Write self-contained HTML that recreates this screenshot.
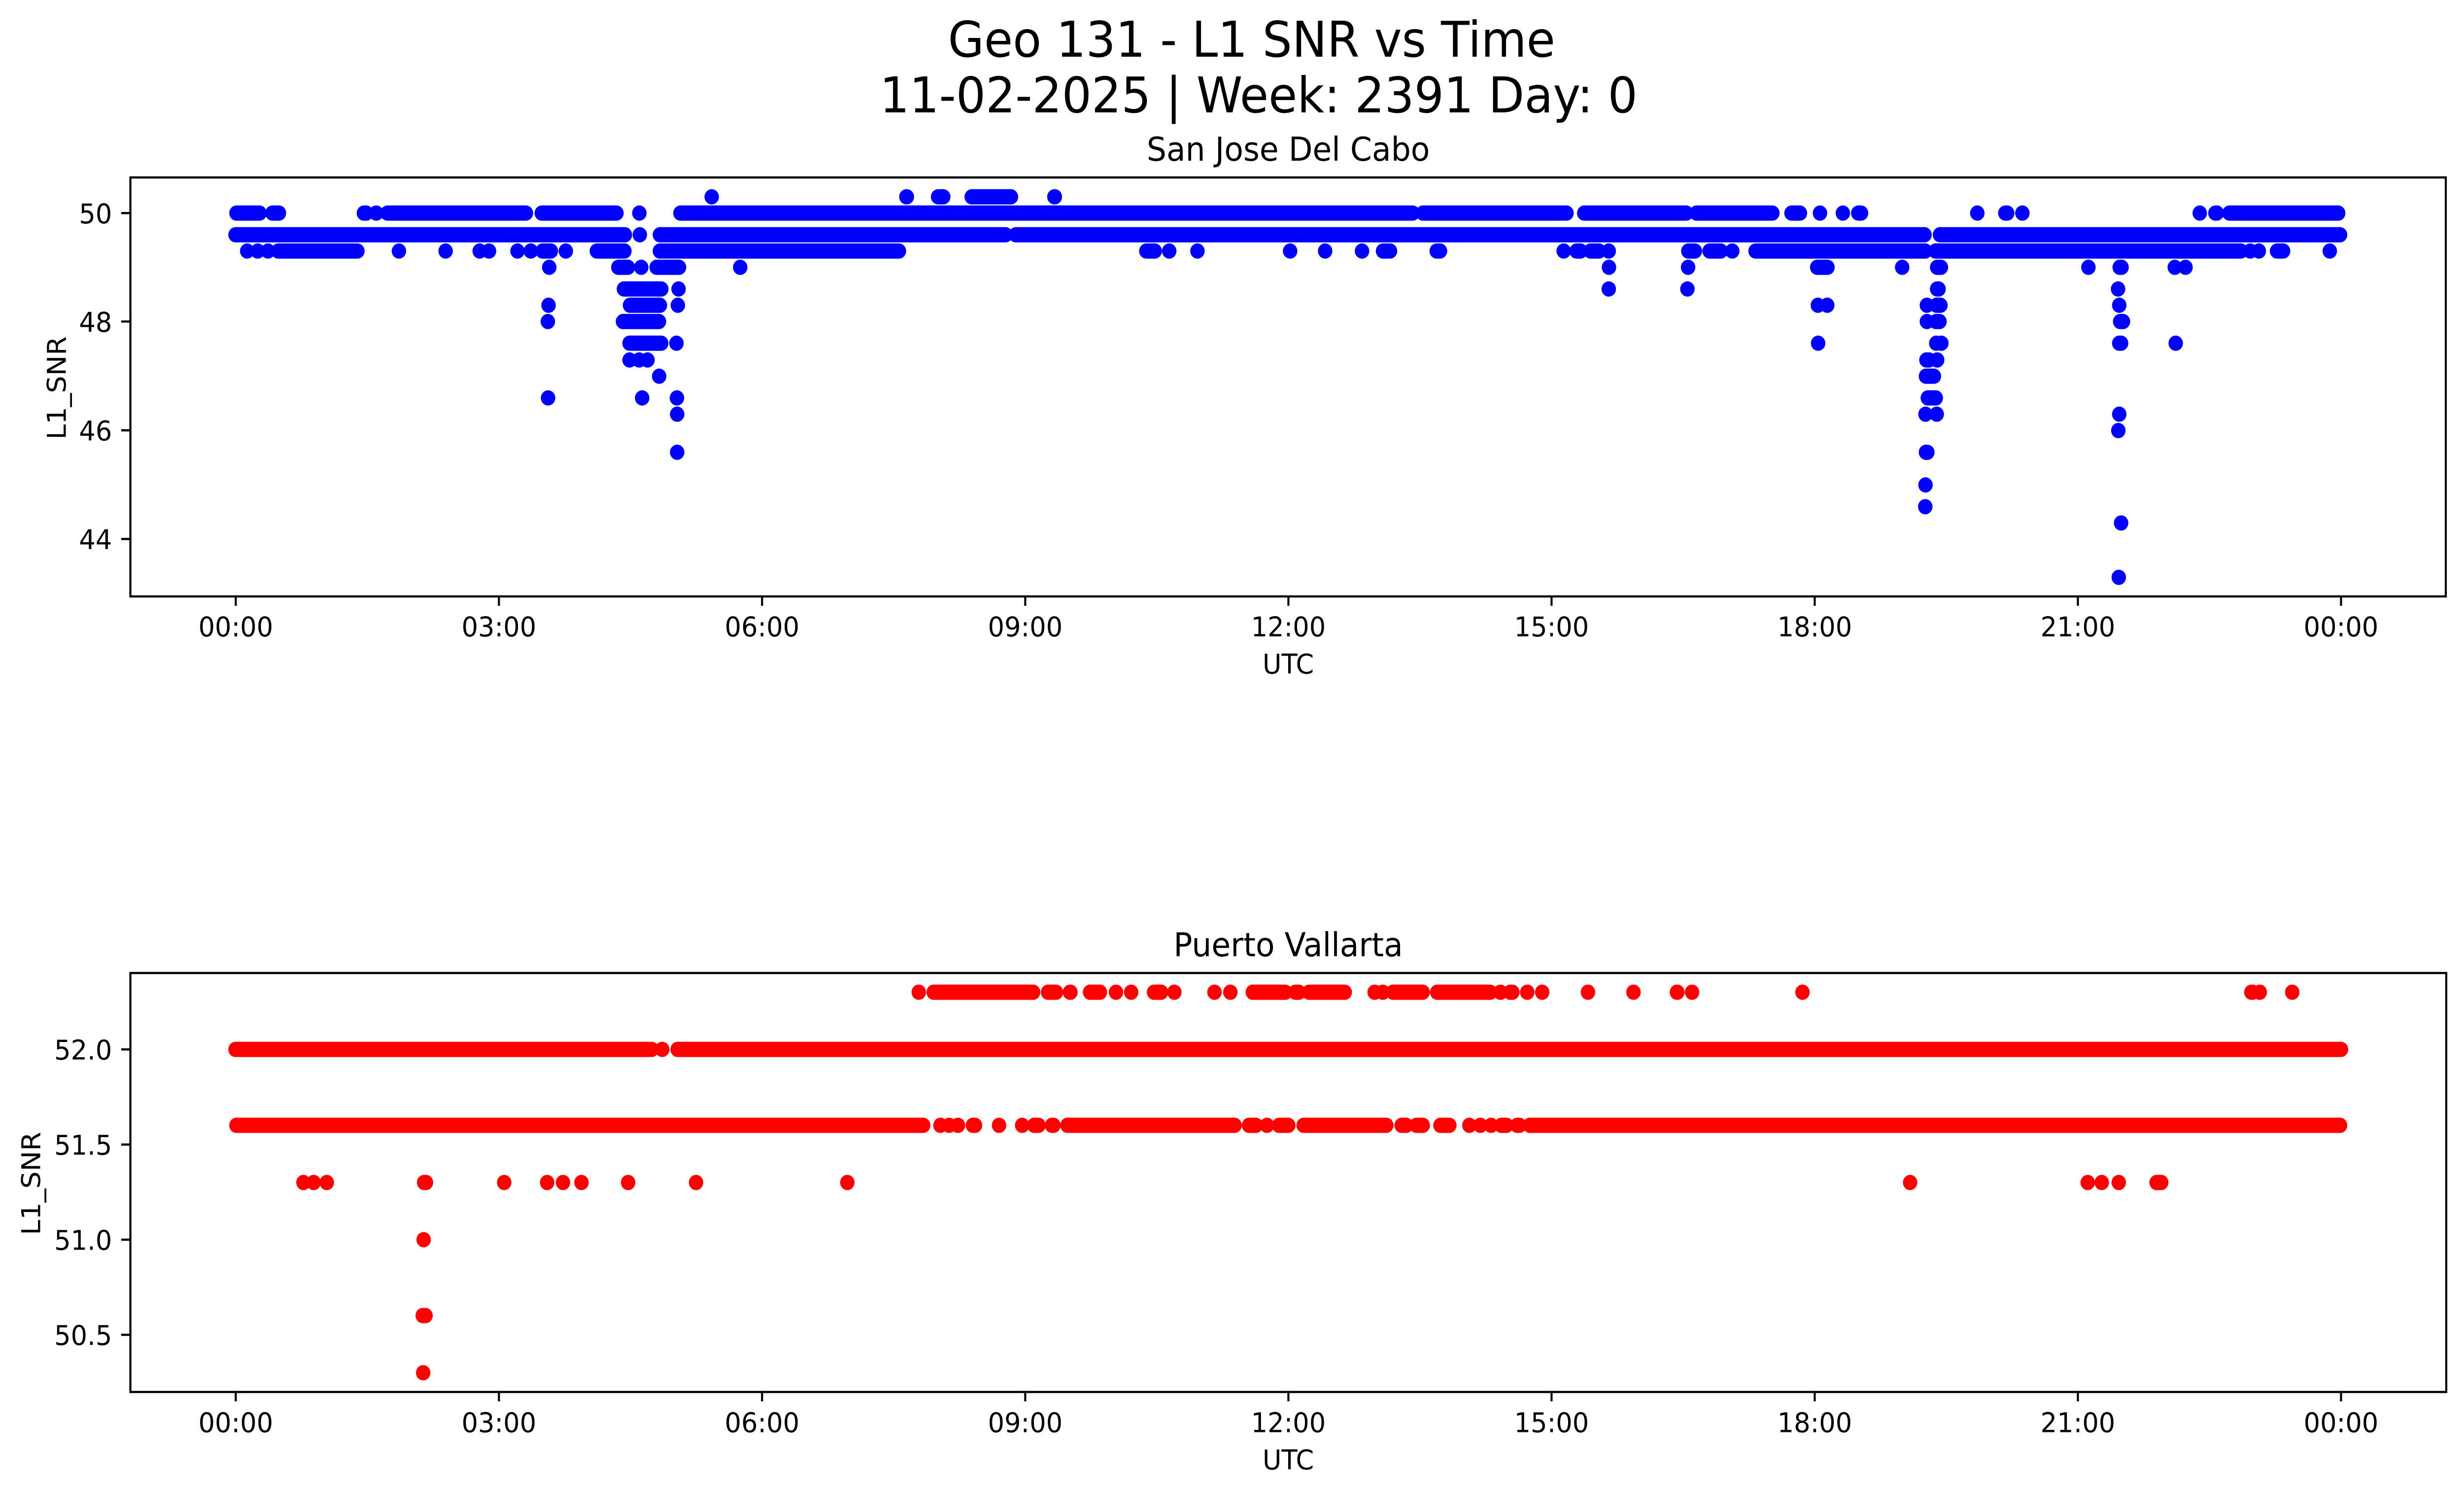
<!DOCTYPE html>
<html lang="en">
<head>
<meta charset="utf-8">
<title>Geo 131 - L1 SNR vs Time</title>
<style>
html,body{margin:0;padding:0;background:#fff;width:100%;height:100%;overflow:hidden}
svg{display:block;width:100vw;height:100vh}
text{font-family:"DejaVu Sans","Liberation Sans",sans-serif;fill:#000}
.t{font-size:55.56px}
.s{font-size:66.67px}
.h{font-size:100px}
.m{text-anchor:middle}
.e{text-anchor:end}
.ax{fill:none;stroke:#000;stroke-width:4.44}
.b{fill:none;stroke:#00f;stroke-width:31;stroke-linecap:round}
.r{fill:none;stroke:#f00;stroke-width:31;stroke-linecap:round}
</style>
</head>
<body>
<svg xmlns="http://www.w3.org/2000/svg" viewBox="0 0 5278 3033" preserveAspectRatio="none">
<rect width="5278" height="3033" fill="#fff"/>

<g class="b">
<path d="M1524.5 399.3h.01M1941.5 399.3H1942.5M2009.5 399.3H2020.5M2081.5 399.3H2165.5M2258.5 399.3H2259.5"/>
<path d="M506.5 432.3H556M583.5 432.3H597.5M779.5 432.3H784.5M806 432.3h.01M830 432.3H1126.5M1160.5 432.3H1320.5M1369.5 432.3h.01M1457.5 432.3H3026M3048 432.3H3355.5M3393.5 432.3H3612M3634 432.3H3796.5M3837.5 432.3H3855.5M3898.5 432.3h.01M3947.5 432.3h.01M3980.5 432.3H3986.5M4235.5 432.3h.01M4295.5 432.3H4299.5M4332 432.3h.01M4712 432.3h.01M4745.5 432.3H4748.5M4775.5 432.3H5008.5"/>
<path d="M504.5 476.3H1338.5M1370.5 476.3h.01M1413.5 476.3H2154M2176 476.3H4122.5M4155.5 476.3H5012.5"/>
<path d="M529.5 509.3h.01M552 509.3h.01M574 509.3h.01M596 509.3H765.5M854.5 509.3h.01M954.5 509.3h.01M1027.5 509.3h.01M1047.5 509.3h.01M1108.5 509.3h.01M1137 509.3h.01M1162 509.3H1180M1212 509.3h.01M1278.5 509.3H1337.5M1413.5 509.3H1925.5M2455.5 509.3H2473.5M2504.5 509.3h.01M2565 509.3h.01M2763.5 509.3h.01M2838.5 509.3h.01M2917.5 509.3h.01M2962.5 509.3H2977.5M3077.5 509.3H3084.5M3349.5 509.3h.01M3377 509.3H3385.5M3407 509.3H3425M3446 509.3h.01M3616.5 509.3H3630.5M3662 509.3H3686M3710.5 509.3h.01M3760.5 509.3H4124M4146 509.3H4800M4820 509.3h.01M4838.5 509.3h.01M4877.5 509.3H4890.5M4990.5 509.3h.01"/>
<path d="M1176.5 542.3h.01M1324.5 542.3H1345M1373.5 542.3h.01M1406.5 542.3H1454.5M1585.5 542.3h.01M3446.5 542.3h.01M3616 542.3h.01M3892.5 542.3H3914.5M4074.5 542.3h.01M4149.5 542.3H4157.5M4473.5 542.3h.01M4540.5 542.3H4544.5M4658.5 542.3h.01M4681.5 542.3h.01"/>
<path d="M1336.5 586.3H1416.5M1453.5 586.3h.01M3446 586.3h.01M3614.5 586.3h.01M4149.5 586.3H4152.5M4537 586.3h.01"/>
<path d="M1175 619.3h.01M1349.5 619.3H1413.5M1452 619.3h.01M3894 619.3h.01M3914 619.3h.01M4127.5 619.3h.01M4148 619.3H4156.5M4539.5 619.3h.01"/>
<path d="M1173.5 652.3h.01M1334.5 652.3H1411.5M4127.5 652.3h.01M4147 652.3H4154.5M4541.5 652.3H4547.5"/>
<path d="M1348.5 696.3H1416.5M1449 696.3h.01M3894.5 696.3h.01M4147.5 696.3h.01M4158.5 696.3h.01M4539.5 696.3H4543.5M4660.5 696.3h.01"/>
<path d="M1348.5 730.3h.01M1369 730.3h.01M1387 730.3h.01M4126.5 730.3H4132M4149.5 730.3h.01"/>
<path d="M1412 763.3h.01M4125.5 763.3H4142.5"/>
<path d="M1174 807.3h.01M1375.5 807.3h.01M1450 807.3h.01M4129.5 807.3H4146.5"/>
<path d="M1450.5 840.3h.01M4124.5 840.3h.01M4148.5 840.3h.01M4539.5 840.3h.01"/>
<path d="M4537.5 873.5h.01"/>
<path d="M1450.5 917.6h.01M4125.5 917.6H4128.5"/>
<path d="M4124.5 983.8h.01M4124 1028h.01M4543.5 1061h.01M4538.5 1171.3h.01"/>
</g>

<g class="r">
<path d="M1968 2013h.01M2000 2013H2213M2245 2013H2262M2292 2013H2293M2335 2013H2356M2390.5 2013h.01M2423 2013h.01M2472 2013H2487M2515.5 2013h.01M2601.5 2013h.01M2635.5 2013h.01M2683.5 2013H2753M2775 2013H2782M2804 2013H2880.5M2944.5 2013h.01M2962 2013h.01M2984 2013H3047.5M3078.5 2013H3192M3214 2013h.01M3235 2013H3239.5M3271.5 2013h.01M3303.5 2013h.01M3401.5 2013h.01M3499 2013h.01M3592 2013H3593M3624.5 2013h.01M3861 2013h.01M4822.5 2013H4825M4840.5 2013h.01M4910 2013h.01"/>
<path d="M504.5 2129H1396M1418.5 2129h.01M1451.5 2129H5014.5"/>
<path d="M506.5 2283H1977.5M2014.5 2283h.01M2033 2283h.01M2052 2283h.01M2084 2283H2088.5M2140 2283h.01M2189.5 2283h.01M2215.5 2283H2224.5M2253.5 2283H2256.5M2286.5 2283H2644.5M2675.5 2283H2690M2714 2283h.01M2740 2283H2759.5M2792.5 2283H2969.5M3002.5 2283H3012M3034 2283H3047.5M3085.5 2283H3104.5M3147.5 2283h.01M3171 2283h.01M3194 2283h.01M3216 2283H3227M3250 2283H3254.5M3277 2283H5012.5"/>
<path d="M650 2399h.01M672 2399h.01M700 2399h.01M908.5 2399H912.5M1080 2399h.01M1172 2399h.01M1206 2399h.01M1245.5 2399h.01M1345.5 2399h.01M1491 2399h.01M1815 2399h.01M4091.5 2399h.01M4472 2399h.01M4502 2399h.01M4538.5 2399h.01M4619.5 2399H4629.5"/>
<path d="M907.5 2515h.01M905.5 2669H911.5M906.5 2785h.01"/>
</g>

<rect class="ax" x="279.3" y="360" width="4959.7" height="850"/>
<rect class="ax" x="279.3" y="1974" width="4960.7" height="850"/>

<path class="ax" d="M505 1210v19M1068.7 1210v19M1632.4 1210v19M2196.1 1210v19M2759.8 1210v19M3323.5 1210v19M3887.2 1210v19M4450.9 1210v19M5014.6 1210v19"/>
<path class="ax" d="M505 2824v19M1068.7 2824v19M1632.4 2824v19M2196.1 2824v19M2759.8 2824v19M3323.5 2824v19M3887.2 2824v19M4450.9 2824v19M5014.6 2824v19"/>
<path class="ax" d="M279 432.3h-19.4M279 652.3h-19.4M279 873h-19.4M279 1093.5h-19.4"/>
<path class="ax" d="M279 2129h-19.4M279 2322h-19.4M279 2515h-19.4M279 2708h-19.4"/>

<text class="h m" x="2681" y="115">Geo 131 - L1 SNR vs Time</text>
<text class="h m" x="2696" y="228">11-02-2025 | Week: 2391 Day: 0</text>
<text class="s m" x="2759.5" y="326">San Jose Del Cabo</text>
<text class="s m" x="2759.5" y="1940">Puerto Vallarta</text>

<g class="t m">
<text x="505" y="1291">00:00</text><text x="1068.7" y="1291">03:00</text><text x="1632.4" y="1291">06:00</text><text x="2196.1" y="1291">09:00</text><text x="2759.8" y="1291">12:00</text><text x="3323.5" y="1291">15:00</text><text x="3887.2" y="1291">18:00</text><text x="4450.9" y="1291">21:00</text><text x="5014.6" y="1291">00:00</text>
<text x="2759.5" y="1366.7">UTC</text>
<text x="505" y="2905.5">00:00</text><text x="1068.7" y="2905.5">03:00</text><text x="1632.4" y="2905.5">06:00</text><text x="2196.1" y="2905.5">09:00</text><text x="2759.8" y="2905.5">12:00</text><text x="3323.5" y="2905.5">15:00</text><text x="3887.2" y="2905.5">18:00</text><text x="4450.9" y="2905.5">21:00</text><text x="5014.6" y="2905.5">00:00</text>
<text x="2759.5" y="2981">UTC</text>
<text transform="translate(141 787) rotate(-90)">L1_SNR</text>
<text transform="translate(86 2401) rotate(-90)">L1_SNR</text>
</g>

<g class="t e">
<text x="240" y="453">50</text><text x="240" y="673">48</text><text x="240" y="893.5">46</text><text x="240" y="1114">44</text>
<text x="240" y="2149.5">52.0</text><text x="240" y="2342.5">51.5</text><text x="240" y="2535.5">51.0</text><text x="240" y="2728.5">50.5</text>
</g>
</svg>
</body>
</html>
